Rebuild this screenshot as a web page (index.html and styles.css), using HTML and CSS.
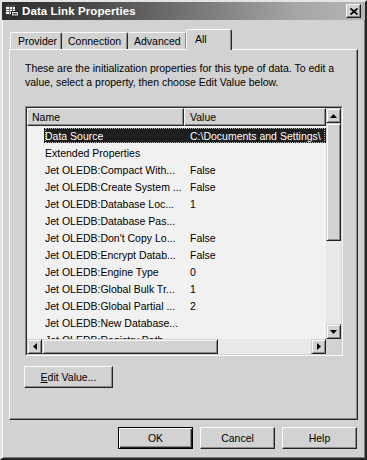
FILE: index.html
```html
<!DOCTYPE html>
<html>
<head>
<meta charset="utf-8">
<link rel="stylesheet" href="styles.css">
</head>
<body>
<div class="window">
  <div class="titlebar">
    <svg class="appicon" width="14" height="14" viewBox="0 0 14 14">
      <rect x="0.5" y="0.5" width="10" height="10" fill="#fff" stroke="#333"/>
      <rect x="1" y="1" width="9" height="2" fill="#444"/>
      <path d="M1 5.5H10M1 7.5H10M4.5 3V11M7.5 3V11" stroke="#777" stroke-width="1"/>
      <rect x="6.5" y="7.5" width="7" height="4.5" fill="#ddd" stroke="#222"/>
      <rect x="8" y="9" width="4" height="1.5" fill="#555"/>
      <path d="M8 13.5H12" stroke="#222"/>
    </svg>
    <span class="title">Data Link Properties</span>
    <div class="closebtn">
      <svg width="8" height="7" viewBox="0 0 8 7"><path d="M0.5 0.5L7.5 6.5M7.5 0.5L0.5 6.5" stroke="#000" stroke-width="1.8"/></svg>
    </div>
  </div>

  <div class="tabs">
    <div class="tab t-provider">Provider</div>
    <div class="tab t-connection">Connection</div>
    <div class="tab t-advanced">Advanced</div>
    <div class="tab active t-all">All</div>
  </div>

  <div class="panel">
    <p class="desc">These are the initialization properties for this type of data. To edit a<br>value, select a property, then choose Edit Value below.</p>

    <div class="listbox">
      <div class="listbox-inner">
        <div class="list">
          <div class="header">
            <div class="hcell h-name">Name</div>
            <div class="hcell h-value">Value</div>
          </div>
          <div class="rows">
            <div class="row sel"><span>Data Source</span><span>C:\Documents and Settings\</span></div>
            <div class="row"><span>Extended Properties</span><span></span></div>
            <div class="row"><span>Jet OLEDB:Compact With...</span><span>False</span></div>
            <div class="row"><span>Jet OLEDB:Create System ...</span><span>False</span></div>
            <div class="row"><span>Jet OLEDB:Database Loc...</span><span>1</span></div>
            <div class="row"><span>Jet OLEDB:Database Pas...</span><span></span></div>
            <div class="row"><span>Jet OLEDB:Don't Copy Lo...</span><span>False</span></div>
            <div class="row"><span>Jet OLEDB:Encrypt Datab...</span><span>False</span></div>
            <div class="row"><span>Jet OLEDB:Engine Type</span><span>0</span></div>
            <div class="row"><span>Jet OLEDB:Global Bulk Tr...</span><span>1</span></div>
            <div class="row"><span>Jet OLEDB:Global Partial ...</span><span>2</span></div>
            <div class="row"><span>Jet OLEDB:New Database...</span><span></span></div>
            <div class="row"><span>Jet OLEDB:Registry Path</span><span></span></div>
          </div>
        </div>
        <div class="vscroll">
          <div class="sbtn"><svg width="7" height="4" viewBox="0 0 7 4"><path d="M3.5 0L7 4H0Z" fill="#000"/></svg></div>
          <div class="thumb vthumb"></div>
          <div class="track"></div>
          <div class="sbtn"><svg width="7" height="4" viewBox="0 0 7 4"><path d="M0 0H7L3.5 4Z" fill="#000"/></svg></div>
        </div>
        <div class="hscroll">
          <div class="sbtn"><svg width="4" height="7" viewBox="0 0 4 7"><path d="M4 0V7L0 3.5Z" fill="#000"/></svg></div>
          <div class="thumb hthumb"></div>
          <div class="track"></div>
          <div class="sbtn"><svg width="4" height="7" viewBox="0 0 4 7"><path d="M0 0V7L4 3.5Z" fill="#000"/></svg></div>
        </div>
        <div class="corner"></div>
      </div>
    </div>

    <div class="btn edit"><span><u>E</u>dit Value...</span></div>
  </div>

  <div class="footer">
    <div class="btn default">OK</div>
    <div class="btn">Cancel</div>
    <div class="btn">Help</div>
  </div>
</div>
</body>
</html>
```

FILE: styles.css
```css
* { box-sizing: border-box; }

body {
  margin: 0;
  width: 367px;
  height: 460px;
  overflow: hidden;
  background: #d2d2d2;
  font-family: "Liberation Sans", Arial, sans-serif;
  font-size: 10.5px;
  color: #000;
}

.window {
  width: 367px;
  height: 460px;
  border: 2px solid;
  border-color: #e4e4e4 #262626 #262626 #e4e4e4;
  box-shadow: inset 1px 1px #ffffff, inset -1px -1px #7c7c7c;
  background: #d2d2d2;
  display: flex;
  flex-direction: column;
}

.titlebar {
  height: 18px;
  flex: none;
  display: flex;
  align-items: center;
  gap: 3px;
  padding: 0 4px 0 3px;
  background: linear-gradient(to right, #2c2c2c 0%, #4a4a4a 25%, #7a7a7a 55%, #a4a4a4 80%, #b6b6b6 100%);
}

.appicon { flex: none; }

.title {
  flex: 1;
  color: #fff;
  font-weight: bold;
  font-size: 11.5px;
  letter-spacing: 0.1px;
}

.closebtn {
  width: 15px;
  height: 14px;
  display: flex;
  align-items: center;
  justify-content: center;
  background: #d2d2d2;
  border: 1px solid;
  border-color: #f4f4f4 #1e1e1e #1e1e1e #f4f4f4;
  box-shadow: inset -1px -1px #808080;
}

.tabs {
  margin-top: 9px;
  height: 20px;
  flex: none;
  display: flex;
  align-items: flex-end;
  padding-left: 8px;
}

.tab {
  height: 17px;
  padding-left: 7px;
  display: flex;
  align-items: center;
  border: 1px solid;
  border-bottom: none;
  border-color: #fafafa #2a2a2a #2a2a2a #fafafa;
  border-radius: 2px 2px 0 0;
  box-shadow: inset -1px 0 #8a8a8a;
  background: #d2d2d2;
  white-space: nowrap;
}

.t-provider { width: 52px; }
.t-connection { width: 66px; border-left: none; padding-left: 6px; }
.t-advanced { width: 59px; border-left: none; padding-left: 6px; }

.tab.active {
  position: relative;
  z-index: 1;
  width: 46px;
  height: 21px;
  margin-bottom: -1px;
  margin-left: -1px;
  padding-left: 8px;
  padding-bottom: 3px;
}

.panel {
  margin: 0 7px;
  height: 371px;
  flex: none;
  border: 1px solid;
  border-color: #fafafa #262626 #262626 #fafafa;
  box-shadow: inset -1px -1px #8a8a8a;
  padding: 11px 14px 0 15px;
}

.desc {
  margin: 0;
  line-height: 14px;
  white-space: nowrap;
}

.listbox {
  margin-top: 17px;
  width: 318px;
  height: 250px;
  border: 1px solid;
  border-color: #8a8a8a #f8f8f8 #f8f8f8 #8a8a8a;
}

.listbox-inner {
  width: 100%;
  height: 100%;
  border: 1px solid;
  border-color: #2a2a2a #d2d2d2 #d2d2d2 #2a2a2a;
  display: grid;
  grid-template-columns: 1fr 15px;
  grid-template-rows: 1fr 15px;
}

.list {
  overflow: hidden;
  background: #f1f1f1;
}

.header {
  display: grid;
  grid-template-columns: 157px 1fr;
  height: 18px;
}

.hcell {
  display: flex;
  align-items: center;
  background: #d2d2d2;
  border: 1px solid;
  border-color: #fafafa #2a2a2a #2a2a2a #fafafa;
  box-shadow: inset -1px -1px #8a8a8a;
  white-space: nowrap;
}

.h-name { padding-left: 4px; }
.h-value { padding-left: 5px; }

.rows { padding-top: 1px; }

.row {
  display: grid;
  grid-template-columns: 145px 1fr;
  height: 17px;
  margin-left: 17px;
  padding-left: 1px;
  align-items: center;
  white-space: nowrap;
  overflow: hidden;
}

.row span { overflow: hidden; }

.row.sel {
  background: #1e1e1e;
  background-clip: padding-box;
  border-top: 1px solid transparent;
  border-bottom: 1px solid transparent;
  color: #fff;
  outline: 1px dotted #b0b0b0;
  outline-offset: -2px;
}

.vscroll {
  display: flex;
  flex-direction: column;
}

.hscroll {
  display: flex;
}

.sbtn, .thumb {
  flex: none;
  background: #d2d2d2;
  border: 1px solid;
  border-color: #d2d2d2 #222 #222 #d2d2d2;
  box-shadow: inset 1px 1px #fafafa, inset -1px -1px #8a8a8a;
}

.sbtn {
  width: 15px;
  height: 15px;
  display: flex;
  align-items: center;
  justify-content: center;
}

.vthumb { height: 118px; }
.hthumb { width: 176px; }

.track {
  flex: 1;
  background: #e8e8e8;
}

.corner { background: #d2d2d2; }

.btn {
  width: 75px;
  height: 22px;
  display: flex;
  align-items: center;
  justify-content: center;
  background: #d2d2d2;
  border: 1px solid;
  border-color: #fafafa #222 #222 #fafafa;
  box-shadow: inset -1px -1px #8a8a8a;
  white-space: nowrap;
}

.btn.edit {
  width: 89px;
  margin-top: 10px;
  margin-left: -1px;
}

.btn.default {
  border-color: #000;
  box-shadow: inset 1px 1px #fafafa, inset -1px -1px #222, inset -2px -2px #8a8a8a;
}

.footer {
  margin-top: 7px;
  display: flex;
  justify-content: flex-end;
  gap: 7px;
  padding-right: 8px;
}
```
